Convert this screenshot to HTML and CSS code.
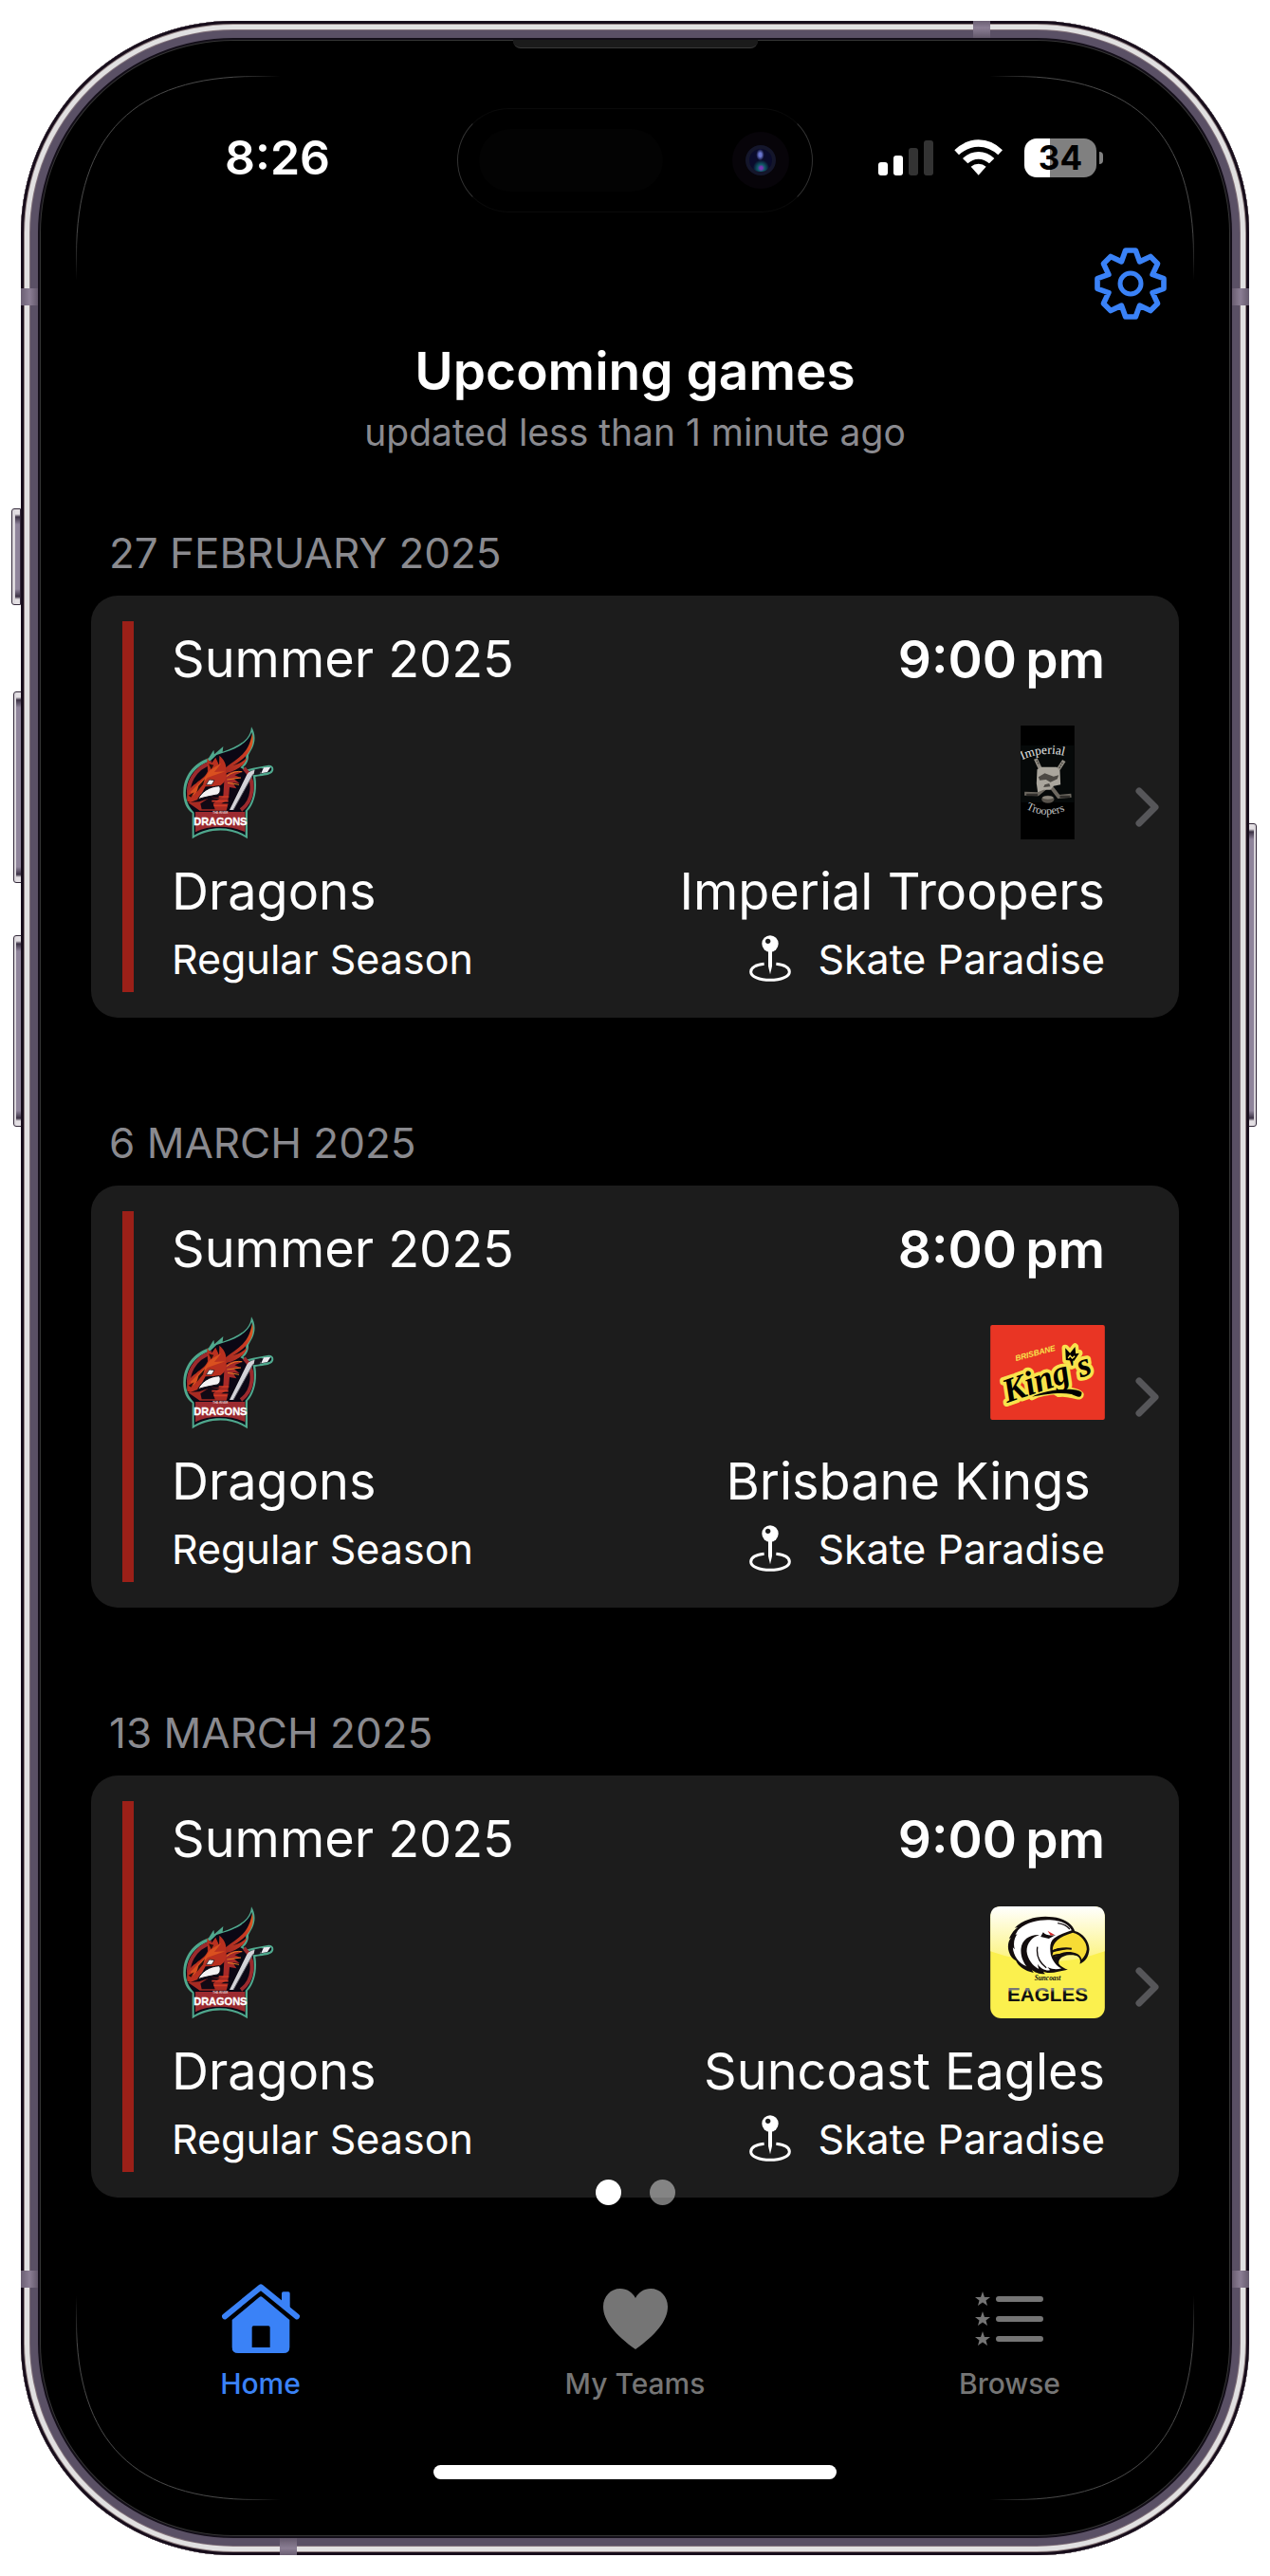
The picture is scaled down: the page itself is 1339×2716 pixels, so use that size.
FILE: index.html
```html
<!DOCTYPE html>
<html lang="en">
<head>
<meta charset="utf-8">
<meta name="viewport" content="width=device-width, initial-scale=1">
<title>Upcoming games</title>
<link rel="stylesheet" href="styles.css">
</head>
<body>
<svg class="sprite" aria-hidden="true">
  <defs>
    <linearGradient id="arc-fade" gradientUnits="userSpaceOnUse" x1="0" y1="215" x2="215" y2="0">
      <stop offset="0" stop-color="#4a4a4a" stop-opacity="0"/>
      <stop offset=".12" stop-color="#4a4a4a"/>
      <stop offset=".88" stop-color="#4a4a4a"/>
      <stop offset="1" stop-color="#4a4a4a" stop-opacity="0"/>
    </linearGradient>
    <linearGradient id="eagle-sky" x1="0" y1="0" x2="0" y2="1">
      <stop offset="0" stop-color="#fff"/>
      <stop offset="1" stop-color="#fcf37a"/>
    </linearGradient>
    <linearGradient id="eagle-word" x1="0" y1="0" x2="0" y2="1">
      <stop offset=".3" stop-color="#777"/>
      <stop offset=".42" stop-color="#111"/>
    </linearGradient>
    <linearGradient id="dragon-wing" x1="0" y1="1" x2="1" y2="0">
      <stop offset="0" stop-color="#a32a22"/>
      <stop offset=".6" stop-color="#c93a22"/>
      <stop offset="1" stop-color="#e0601e"/>
    </linearGradient>
    <symbol id="arc" viewBox="0 0 216 216">
      <path d="M.5 215V190C.5 62 62 .5 190 .5H215" fill="none" stroke="url(#arc-fade)" stroke-width="1"/>
    </symbol>
    <symbol id="chevron" viewBox="0 0 26 42">
      <path d="M4 4L21 21L4 38" fill="none" stroke="#565659" stroke-width="7" stroke-linecap="round" stroke-linejoin="round"/>
    </symbol>
    <symbol id="pin" viewBox="0 0 132 150">
      <path d="M47 91C20 94 5 104 5 116C5 131 32 142 66 142S127 131 127 116C127 104 112 94 85 91" fill="none" stroke="#fff" stroke-width="9"/>
      <path d="M60 45H72V98L66 124L60 98Z" fill="#fff"/>
      <circle cx="66" cy="27" r="26" fill="#fff"/>
      <circle cx="59" cy="19" r="8" fill="#1c1c1c"/>
    </symbol>
    <symbol id="dragon" viewBox="33 75 360 360">
      <path d="M98 433V352C78 338 68 312 70 281C72 236 100 196 150 178L166 152L168 166L196 141L194 158C225 148 252 135 270 116C280 105 284 92 285 79C298 98 299 125 288 146L276 168C277 186 270 199 259 207L272 214L290 209L340 200C356 200 360 216 348 226C338 233 318 234 298 237C304 275 297 320 273 345V433C225 398 150 398 98 433Z" fill="#4fa88d"/>
      <path d="M104 422V350C86 332 76 310 78 281C82 238 108 203 156 186L175 168L200 160C240 148 275 128 286 96C292 115 288 132 280 146L268 166C268 184 264 196 250 208L275 220L342 206C352 207 350 217 342 222L290 232C298 275 292 318 266 344V422C220 392 150 392 104 422Z" fill="#0b0714"/>
      <path d="M92 312C74 262 106 208 160 192M262 210C302 250 290 315 252 342" fill="none" stroke="#9c2a2d" stroke-width="12"/>
      <path d="M204 208C240 178 276 168 288 100C300 150 262 182 226 202C246 196 262 188 272 174C268 200 240 216 204 226Z" fill="url(#dragon-wing)"/>
      <path d="M200 235C225 215 240 218 256 222L232 232L252 240L230 244L248 258L226 256L238 274L216 270L214 296L196 300Z" fill="#a82a28"/>
      <path d="M206 236Q232 216 256 221M208 246L252 240M210 256L246 262" fill="none" stroke="#e87b22" stroke-width="3"/>
      <path d="M82 314C80 288 88 272 110 258C128 242 138 240 147 220L145 178L158 196L172 176L183 200L184 170C198 182 208 198 204 216C212 240 198 262 182 266L140 268L118 308L92 318Z" fill="#b9301f"/>
      <path d="M92 286L137 240L154 216L190 194L168 222L202 220L146 240L128 264L102 296Z" fill="#d9501f"/>
      <path d="M118 266L138 244L132 262L112 286ZM86 296L104 286L94 302ZM150 196L166 200L158 214Z" fill="#28100f"/>
      <path d="M142 262L152 246L168 248L160 262Z" fill="#eee" stroke="#130b12" stroke-width="2"/>
      <path d="M116 308C128 284 152 268 184 266C190 276 186 292 176 294C156 298 134 302 116 308Z" fill="#f3f1f2" stroke="#130b12" stroke-width="3"/>
      <path d="M84 318L120 316L160 302L186 304L212 292V310L190 322H212L206 344H122Z" fill="#a62a22"/>
      <path d="M124 322L154 302L184 306L164 322L170 340H128Z" fill="#120914"/>
      <path d="M160 314H212M166 328H208M182 300H214" stroke="#d23b27" stroke-width="5"/>
      <path d="M216 342L270 232Q276 220 290 217L314 212V226L290 230L228 342Z" fill="#d3d3d8"/>
      <path d="M228 342L290 230L314 226" fill="none" stroke="#5d5d66" stroke-width="3"/>
      <path d="M296 214L318 209L312 229L292 232Z" fill="#16151d"/>
      <path d="M324 208L346 206L336 222L316 226Z" fill="#eceaf0"/>
      <path d="M108 348H265V412C218 390 152 390 108 412Z" fill="#9c2b30"/>
      <text x="187" y="354" class="dragon-sub">THE RIVER</text>
      <text x="187" y="390" class="dragon-word">DRAGONS</text>
    </symbol>
  </defs>
</svg>

<div class="phone">
  <span class="key key-action"></span>
  <span class="key key-up"></span>
  <span class="key key-down"></span>
  <span class="key key-side"></span>
  <span class="band band-top"></span>
  <span class="band band-bottom"></span>
  <span class="band band-side band-tl"></span>
  <span class="band band-side band-tr"></span>
  <span class="band band-side band-bl"></span>
  <span class="band band-side band-br"></span>
  <span class="speaker"></span>
  <svg class="arc arc-tl" aria-hidden="true"><use href="#arc"/></svg>
  <svg class="arc arc-tr" aria-hidden="true"><use href="#arc"/></svg>
  <svg class="arc arc-bl" aria-hidden="true"><use href="#arc"/></svg>
  <svg class="arc arc-br" aria-hidden="true"><use href="#arc"/></svg>

  <div class="status">
    <time class="clock">8:26</time>
    <div class="island"><span class="sensor"></span><span class="camera"><span class="lens"></span></span></div>
    <div class="indicators">
      <svg width="58" height="38" viewBox="0 0 58 38" aria-hidden="true">
        <rect x="0" y="24" width="10" height="14" rx="3" fill="#fff"/>
        <rect x="16" y="17" width="10" height="21" rx="3" fill="#fff"/>
        <rect x="32" y="9" width="10" height="29" rx="3" fill="#333"/>
        <rect x="48" y="1" width="10" height="37" rx="3" fill="#333"/>
      </svg>
      <svg width="52" height="38" viewBox="351 440 156 114" aria-hidden="true">
        <path d="M352 474Q385 441 428 441T504 474L490 489Q462 463 428 463T366 489Z" fill="#fff"/>
        <path d="M378 500Q400 479 428 479T478 500L462 516Q447 502 428 502T394 516Z" fill="#fff"/>
        <path d="M404 526Q414 517 428 517T452 526L428 553Z" fill="#fff"/>
      </svg>
      <span class="battery">34</span>
    </div>
  </div>

  <div class="toolbar">
    <button class="settings" type="button" aria-label="Settings">
      <svg width="76" height="76" viewBox="-114 -114 228 228" aria-hidden="true">
        <path d="M-16-105H16L28.700-69.300L63-85.600L85.600-63L69.300-28.700L105-16V16L69.300 28.700L85.600 63L63 85.600L28.700 69.300L16 105H-16L-28.700 69.300L-63 85.600L-85.600 63L-69.300 28.700L-105 16V-16L-69.300-28.700L-85.600-63L-63-85.600L-28.700-69.300Z" fill="none" stroke="#3a82f7" stroke-width="17" stroke-linejoin="round"/>
        <circle r="33" fill="none" stroke="#3a82f7" stroke-width="15"/>
      </svg>
    </button>
  </div>

  <header class="heading">
    <h1>Upcoming games</h1>
    <p>updated less than 1 minute ago</p>
  </header>

  <main class="games">
    <section>
      <h2>27 FEBRUARY 2025</h2>
      <a class="card" href="#game-1">
        <span class="stripe"></span>
        <div class="details">
          <div class="row"><span>Summer 2025</span><time class="start">9:00&#8201;pm</time></div>
          <div class="row logos">
            <svg width="120" height="120" role="img" aria-label="Dragons logo"><use href="#dragon"/></svg>
            <svg class="logo-tall" width="57" height="120" viewBox="168 75 170 360" role="img" aria-label="Imperial Troopers logo">
              <path id="arch-top" d="M173 184Q253 146 338 182" fill="none"/>
              <path id="arch-bottom" d="M184 338Q255 378 334 332" fill="none"/>
              <rect x="168" y="75" width="170" height="360" fill="#000"/>
              <rect x="168" y="138" width="170" height="180" fill="#060909"/>
              <path d="M215 180L230 212M305 186L284 218" stroke="#8f8b82" stroke-width="12"/>
              <path d="M219 185L226 200M300 192L290 209" stroke="#33302d" stroke-width="4" stroke-dasharray="4 4"/>
              <path d="M180 290L222 292L246 272M328 296L288 300L262 266" fill="none" stroke="#6d6860" stroke-width="12"/>
              <path d="M186 294H222M292 300H324" stroke="#33302d" stroke-width="8"/>
              <path d="M220 214L232 206H282L292 218L294 262L272 266L262 278H240L222 286L218 258Z" fill="#aaa69d"/>
              <path d="M224 238L244 226L272 236L288 232L284 244L262 254L248 246L228 248ZM244 262L258 258L262 268L240 270Z" fill="#4c4944"/>
              <ellipse cx="254" cy="308" rx="20" ry="12" fill="#57524b"/>
              <ellipse cx="254" cy="303" rx="17" ry="5" fill="#8d877d"/>
              <text class="troopers"><textPath href="#arch-top">Imperial</textPath></text>
              <text class="troopers troopers-low"><textPath href="#arch-bottom">Troopers</textPath></text>
            </svg>
          </div>
          <div class="row names"><span>Dragons</span><span>Imperial Troopers</span></div>
          <div class="row meta"><span>Regular Season</span><span class="venue"><svg width="44" height="50" aria-hidden="true"><use href="#pin"/></svg>Skate Paradise</span></div>
        </div>
        <svg class="chevron" width="26" height="42" aria-hidden="true"><use href="#chevron"/></svg>
      </a>
    </section>

    <section>
      <h2>6 MARCH 2025</h2>
      <a class="card" href="#game-2">
        <span class="stripe"></span>
        <div class="details">
          <div class="row"><span>Summer 2025</span><time class="start">8:00&#8201;pm</time></div>
          <div class="row logos">
            <svg width="120" height="120" role="img" aria-label="Dragons logo"><use href="#dragon"/></svg>
            <svg width="121" height="100" viewBox="73 51 362 300" role="img" aria-label="Brisbane Kings logo">
              <rect x="73" y="51" width="362" height="300" rx="6" fill="#e93524"/>
              <text x="154" y="165" transform="rotate(-15 154 165)" class="kings-sub">BRISBANE</text>
              <g stroke="#f8e34c" stroke-width="22" fill="none" stroke-linejoin="round" stroke-linecap="round">
                <path d="M312 162L310 124L325 140L341 120L343 142L354 140L338 164Z"/>
                <path d="M205 278C240 258 340 250 358 272C350 284 325 262 290 268"/>
              </g>
              <text x="126" y="298" transform="rotate(-19 126 298)" class="kings-word kings-glow">King's</text>
              <text x="126" y="298" transform="rotate(-19 126 298)" class="kings-word">King's</text>
              <path d="M205 278C240 258 340 244 362 264C362 288 345 276 330 270C290 262 240 272 205 278Z" fill="#000"/>
              <path d="M312 162L310 124L325 140L341 120L343 142L354 140L338 164Z" fill="#000"/>
              <path d="M319 156L325 148L332 156L340 149" fill="none" stroke="#f8e34c" stroke-width="4"/>
            </svg>
          </div>
          <div class="row names"><span>Dragons</span><span>Brisbane Kings&nbsp;</span></div>
          <div class="row meta"><span>Regular Season</span><span class="venue"><svg width="44" height="50" aria-hidden="true"><use href="#pin"/></svg>Skate Paradise</span></div>
        </div>
        <svg class="chevron" width="26" height="42" aria-hidden="true"><use href="#chevron"/></svg>
      </a>
    </section>

    <section>
      <h2>13 MARCH 2025</h2>
      <a class="card" href="#game-3">
        <span class="stripe"></span>
        <div class="details">
          <div class="row"><span>Summer 2025</span><time class="start">9:00&#8201;pm</time></div>
          <div class="row logos">
            <svg width="120" height="120" role="img" aria-label="Dragons logo"><use href="#dragon"/></svg>
            <svg width="121" height="118" viewBox="73 62 362 354" role="img" aria-label="Suncoast Eagles logo">
              <rect x="73" y="62" width="362" height="354" rx="34" fill="#fbf04e"/>
              <path d="M73 204V96Q73 62 107 62H401Q435 62 435 96V204Q254 270 73 204Z" fill="url(#eagle-sky)"/>
              <path d="M132 206C126 190 130 170 138 162L132 164C140 146 150 134 160 128L150 130C180 100 230 90 270 96C306 100 332 116 340 140C366 146 386 172 386 198C384 222 374 236 356 244C362 222 346 214 322 216C300 218 286 230 290 244C296 252 308 258 318 262C290 266 262 278 240 268L246 276C226 276 212 270 204 262L210 272C180 266 162 252 154 234C144 228 136 220 132 206Z" fill="#130d0e"/>
              <path d="M160 138C190 106 250 100 284 108C308 112 324 124 330 138C310 146 292 150 276 162C262 172 260 190 264 214C268 230 280 250 298 258C284 262 270 262 254 254L262 264C246 266 232 258 222 244L226 260C206 250 190 228 188 204C188 178 204 160 228 152C200 150 172 166 170 196C168 220 178 240 188 252C162 242 146 218 144 192L150 198C144 178 150 160 158 150L152 152Z" fill="#fff"/>
              <path d="M240 144Q252 158 280 152L258 164L232 158Z" fill="#130d0e"/>
              <path d="M254 139L276 152L264 154Z" fill="#d62b2b"/>
              <path d="M270 200C270 176 290 158 334 145C360 152 378 174 378 198C376 212 370 222 362 230C358 212 338 206 320 206C306 206 292 210 286 218L268 220L272 206L322 196L290 194Z" fill="#f7dc35"/>
              <path d="M270 204C290 194 312 194 330 196M268 220C282 214 290 214 298 214" fill="none" stroke="#130d0e" stroke-width="6"/>
              <path d="M222 190C218 215 228 240 250 256M286 115C306 118 318 126 324 134" fill="none" stroke="#130d0e" stroke-width="4"/>
              <text x="254" y="297" class="eagles-sub">Suncoast</text>
              <text x="254" y="362" class="eagles-word">EAGLES</text>
            </svg>
          </div>
          <div class="row names"><span>Dragons</span><span>Suncoast Eagles</span></div>
          <div class="row meta"><span>Regular Season</span><span class="venue"><svg width="44" height="50" aria-hidden="true"><use href="#pin"/></svg>Skate Paradise</span></div>
        </div>
        <svg class="chevron" width="26" height="42" aria-hidden="true"><use href="#chevron"/></svg>
      </a>
    </section>
    <div class="pager">
      <button type="button" class="dot dot-on" aria-label="Page 1"></button>
      <button type="button" class="dot" aria-label="Page 2"></button>
    </div>
  </main>

  <nav class="tabs">
    <a class="tab tab-on" href="#home">
      <svg width="82" height="74" viewBox="700 324 246 222" aria-hidden="true">
        <path d="M709 427L823 334L937 427" fill="none" stroke="currentColor" stroke-width="18" stroke-linecap="round" stroke-linejoin="round"/>
        <path d="M889 380V354Q889 349 894 349H910Q915 349 915 354V404Z" fill="currentColor"/>
        <path fill-rule="evenodd" d="M732 438L818 366Q823 362 828 366L914 438V524Q914 543 895 543H751Q732 543 732 524ZM800 457Q795 457 795 462V525H852V462Q852 457 847 457Z" fill="currentColor"/>
      </svg>
      <span>Home</span>
    </a>
    <a class="tab" href="#teams">
      <svg width="82" height="74" viewBox="0 0 82 74" aria-hidden="true">
        <path d="M41 69C20 54 7 39 7 24C7 13 15 5 25 5C32 5 38 9 41 15C44 9 50 5 57 5C67 5 75 13 75 24C75 39 62 54 41 69Z" fill="currentColor"/>
      </svg>
      <span>My Teams</span>
    </a>
    <a class="tab" href="#browse">
      <svg width="82" height="74" viewBox="0 0 82 74" aria-hidden="true">
        <g fill="none" stroke="currentColor" stroke-width="6" stroke-linecap="round"><path d="M29 16H73M29 37H73M29 58H73"/></g>
        <g fill="currentColor">
          <path id="star" d="M12 8L14 14H20L15.500 17.500L17 23L12 19.500L7 23L8.500 17.500L4 14H10Z"/>
          <use href="#star" y="21"/><use href="#star" y="42"/>
        </g>
      </svg>
      <span>Browse</span>
    </a>
  </nav>
  <div class="home-indicator"></div>
</div>
</body>
</html>
```
FILE: styles.css
```css
* { box-sizing: border-box; }

body {
  margin: 0;
  padding: 22px;
  background: #fff;
  color: #fff;
  font-family: Inter, "Liberation Sans", sans-serif;
}

h1, h2, p { margin: 0; }
a { color: inherit; text-decoration: none; }
button { padding: 0; border: 0; background: none; cursor: pointer; }
svg { display: block; flex: none; }
.sprite { position: absolute; width: 0; height: 0; }

/* Device body */
.phone {
  position: relative;
  padding: 92px 58px 80px;
  border-radius: 224px;
  background: #000;
  box-shadow:
    inset 0 0 0 3px #170d1b,
    inset 0 0 0 4px #8d7d7f,
    inset 0 0 0 9px #e1e0e1,
    inset 0 0 0 10px #85757d,
    inset 0 0 0 18px #5a5065,
    inset 0 0 0 20px #130e18,
    inset 0 0 0 21px #353535;
}

.key {
  position: absolute;
  z-index: -1;
  width: 10px;
  border: 1px solid #33293a;
  background: linear-gradient(#e4e0e4 0 5px, #3a3043 8px, #8f849b 16px calc(100% - 16px), #3a3043 calc(100% - 8px), #e4e0e4 calc(100% - 5px));
}
.key-action { left: -10px; top: 514px; height: 102px; border-radius: 3px 0 0 3px; box-shadow: inset 3px 0 #dcd8dd; }
.key-up, .key-down { left: -8px; height: 202px; border-radius: 3px 0 0 3px; box-shadow: inset 2px 0 #dcd8dd; }
.key-up { top: 707px; }
.key-down { top: 964px; }
.key-side { right: -8px; top: 846px; height: 320px; border-radius: 0 3px 3px 0; box-shadow: inset -2px 0 #dcd8dd; }

.band { position: absolute; width: 18px; height: 18px; }
.band-top { top: 0; right: 273px; background: linear-gradient(#6a5e72, #8b7e94 40%, #64596c); }
.band-bottom { bottom: 0; left: 273px; background: linear-gradient(#64596c, #8b7e94 60%, #6a5e72); }
.band-side { background: linear-gradient(90deg, #6a5e72, #8b7e94 50%, #64596c); }
.band-tl { top: 282px; left: 0; }
.band-tr { top: 282px; right: 0; }
.band-bl { bottom: 282px; left: 0; }
.band-br { bottom: 282px; right: 0; }

.speaker {
  position: absolute;
  top: 20px;
  left: calc(50% - 129px);
  width: 258px;
  height: 9px;
  border-bottom: 1px solid #3a3a3a;
  border-radius: 0 0 8px 8px;
  background: #1b1b1b;
}

.arc { position: absolute; width: 216px; height: 216px; pointer-events: none; }
.arc-tl { top: 58px; left: 58px; }
.arc-tr { top: 58px; right: 58px; transform: scaleX(-1); }
.arc-bl { bottom: 58px; left: 58px; transform: scaleY(-1); }
.arc-br { bottom: 58px; right: 58px; transform: scale(-1); }

/* Status bar */
.status {
  display: grid;
  grid-template-columns: 1fr 375px 1fr;
  align-items: start;
}
.clock { padding-left: 157px; font-size: 50px; font-weight: 600; line-height: 104px; }
.island {
  display: flex;
  align-items: center;
  justify-content: space-between;
  height: 110px;
  padding: 0 24px 0 22px;
  border: 1px solid;
  border-color: #0a0a0a #333;
  border-radius: 55px;
}
.sensor { width: 194px; height: 66px; border-radius: 33px; background: #030303; }
.camera { display: grid; place-items: center; width: 60px; height: 60px; border-radius: 50%; background: #070409; }
.lens {
  width: 32px;
  height: 32px;
  border: 4px solid #14162b;
  border-radius: 50%;
  background:
    radial-gradient(ellipse at 48% 26%, #6a76cf 0 8%, transparent 24%),
    radial-gradient(circle at 52% 84%, #7b35b5 0 6%, #0f5b68 16%, transparent 36%),
    #0a0b2c;
}
.indicators { display: flex; align-items: center; justify-content: flex-end; gap: 22px; height: 104px; padding-right: 103px; }
.battery {
  position: relative;
  width: 76px;
  height: 41px;
  border-radius: 13px;
  background: linear-gradient(90deg, #fff 27px, #808080 27px);
  color: #000;
  font-size: 35px;
  font-weight: 700;
  line-height: 41px;
  text-align: center;
}
.battery::after {
  content: "";
  position: absolute;
  top: 14px;
  right: -7px;
  width: 4px;
  height: 13px;
  border-radius: 0 6px 6px 0;
  background: #808080;
}

.toolbar { display: flex; justify-content: flex-end; padding: 37px 29px 0 0; }

.heading { padding-top: 22px; text-align: center; }
.heading h1 { font-size: 55px; font-weight: 600; line-height: 64px; }
.heading p { padding-top: 9px; color: #8a8a8f; font-size: 39px; line-height: 48px; }

/* Game list */
.games { position: relative; display: grid; gap: 104px; padding: 75px 16px 0; }
h2 { padding: 0 19px 17px; color: #8a8a8f; font-size: 44px; font-weight: 400; line-height: 56px; }
.card {
  display: flex;
  align-items: stretch;
  padding: 27px 20px 27px 33px;
  border-radius: 28px;
  background: #1c1c1c;
}
.stripe { width: 12px; background: #9b2018; }
.details { flex: 1; padding: 8px 32px 7px 40px; font-size: 54px; line-height: 64px; }
.row { display: flex; align-items: center; justify-content: space-between; }
.start { font-size: 55px; font-weight: 600; }
.logos { height: 120px; margin: 38px 0 23px; }
.logo-tall { margin-right: 32px; }
.meta { padding-top: 11px; font-size: 43px; line-height: 56px; }
.venue { display: flex; align-items: center; gap: 28px; }
.chevron { align-self: center; }

.pager { position: absolute; right: 0; bottom: -8px; left: 0; display: flex; justify-content: center; gap: 30px; }
.dot { width: 27px; height: 27px; border-radius: 50%; background: rgba(255, 255, 255, .46); }
.dot-on { background: #fff; }

/* Logo lettering */
.dragon-word { fill: #fff; stroke: #fff; stroke-width: 1px; font: 700 33px "Liberation Sans", sans-serif; text-anchor: middle; }
.dragon-sub { fill: #e9c9c9; font: 700 9px "Liberation Sans", sans-serif; text-anchor: middle; }
.troopers { fill: #e6e6e6; font: 40px "Liberation Serif", serif; }
.troopers-low { fill: #c4c4c4; font-size: 36px; }
.kings-word { fill: #000; font: italic 700 108px "Liberation Serif", serif; }
.kings-glow { fill: #f8e34c; stroke: #f8e34c; stroke-width: 22px; stroke-linejoin: round; }
.kings-sub { fill: #f8e34c; font: italic 700 25px "Liberation Sans", sans-serif; }
.eagles-word { fill: url(#eagle-word); font: 700 62px "Liberation Sans", sans-serif; text-anchor: middle; }
.eagles-sub { fill: #111; font: italic 700 22px "Liberation Serif", serif; text-anchor: middle; }

/* Tab bar */
.tabs { display: grid; grid-template-columns: repeat(3, 1fr); margin: 0 -3px; padding-top: 91px; }
.tab { display: grid; justify-items: center; gap: 13px; color: #757575; font-size: 30px; font-weight: 500; line-height: 36px; }
.tab-on { color: #3a82f7; }
.home-indicator { width: 36%; height: 15px; margin: 68px auto 0; border-radius: 8px; background: #fff; }
```
